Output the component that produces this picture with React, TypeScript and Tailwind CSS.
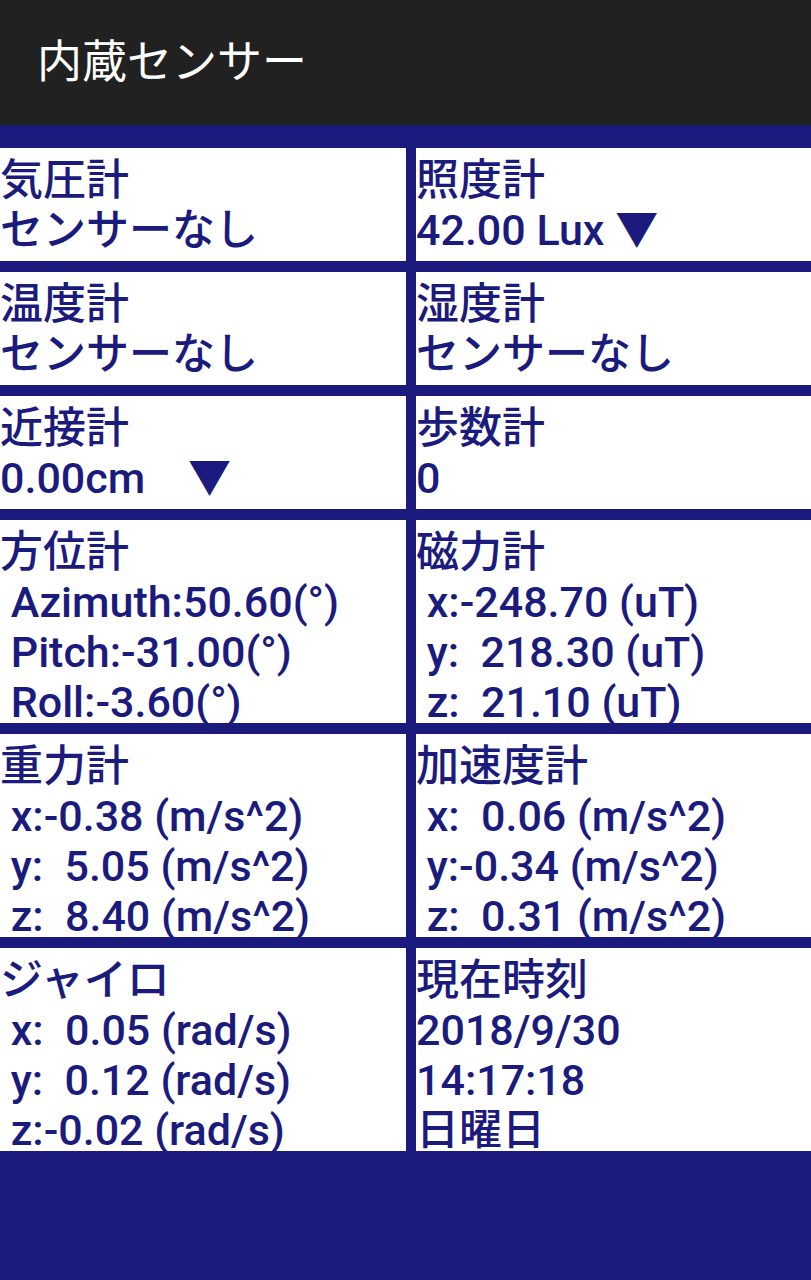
import React from 'react';

interface Cell {
  title: string;
  lines: string[];
}

const navy = 'text-[#1b1b7e]';

const cells: Cell[] = [
  { title: '気圧計', lines: ['センサーなし'] },
  { title: '照度計', lines: ['42.00 Lux ▼'] },
  { title: '温度計', lines: ['センサーなし'] },
  { title: '湿度計', lines: ['センサーなし'] },
  { title: '近接計', lines: ['0.00cm    ▼'] },
  { title: '歩数計', lines: ['0'] },
  { title: '方位計', lines: [' Azimuth:50.60(°)', ' Pitch:-31.00(°)', ' Roll:-3.60(°)'] },
  { title: '磁力計', lines: [' x:-248.70 (uT)', ' y:  218.30 (uT)', ' z:  21.10 (uT)'] },
  { title: '重力計', lines: [' x:-0.38 (m/s^2)', ' y:  5.05 (m/s^2)', ' z:  8.40 (m/s^2)'] },
  { title: '加速度計', lines: [' x:  0.06 (m/s^2)', ' y:-0.34 (m/s^2)', ' z:  0.31 (m/s^2)'] },
  { title: 'ジャイロ', lines: [' x:  0.05 (rad/s)', ' y:  0.12 (rad/s)', ' z:-0.02 (rad/s)'] },
  { title: '現在時刻', lines: ['2018/9/30', '14:17:18', '日曜日'] },
];

function SensorCell({ cell }: { cell: Cell }) {
  return (
    <div className={`bg-white overflow-hidden pt-[7px] text-[43px] font-medium leading-[50px] whitespace-pre ${navy}`}>
      <div>{cell.title}</div>
      {cell.lines.map((line, i) => (
        <div key={i}>{line}</div>
      ))}
    </div>
  );
}

export default function App() {
  return (
    <div
      className="min-h-screen h-[1280px] w-[811px] bg-[#1b1b7e] overflow-hidden"
      style={{ fontFamily: 'Roboto, "Noto Sans CJK JP", sans-serif' }}
    >
      <header className="h-[125px] bg-[#212121] flex items-center pl-[37px]">
        <h1 className="text-white text-[45px] font-normal leading-none">内蔵センサー</h1>
      </header>

      <div className="pt-[23px] grid grid-cols-[406px_1fr] grid-rows-[113px_113px_113px_203px_203px_203px] gap-x-[10px] gap-y-[11px]">
        {cells.map((cell) => (
          <SensorCell key={cell.title} cell={cell} />
        ))}
      </div>
    </div>
  );
}
